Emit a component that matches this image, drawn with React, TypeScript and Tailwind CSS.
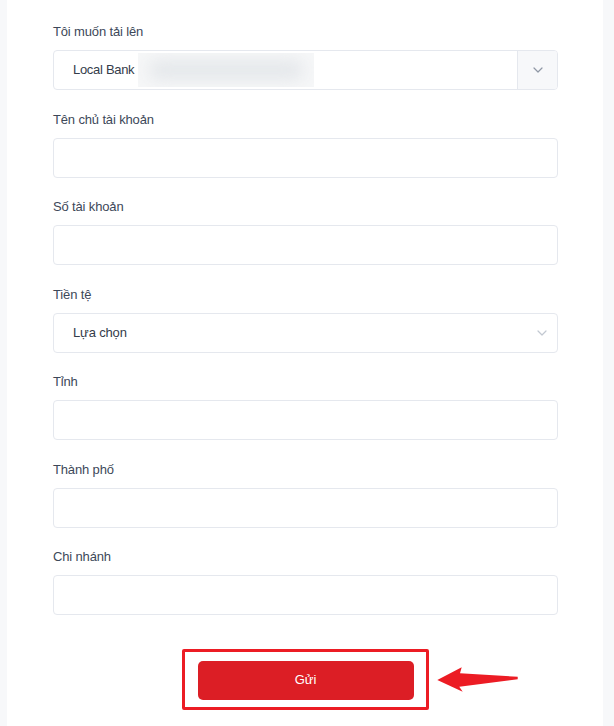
import React from "react";

const font = { fontFamily: '"Liberation Sans", Arial, sans-serif' };

function Chevron({ color }: { color: string }) {
  return (
    <svg width="10" height="6" viewBox="0 0 10 6" fill="none">
      <path d="M1 1 L5 5 L9 1" stroke={color} strokeWidth="1.2" strokeLinecap="round" strokeLinejoin="round" />
    </svg>
  );
}

function Field({ label, children }: { label: string; children?: React.ReactNode }) {
  return (
    <div className="mb-[19.5px]">
      <div className="h-5 mb-2 text-[13px] leading-5 tracking-[-0.15px] text-[#3d4859]">{label}</div>
      {children ?? <div className="h-10 rounded border border-[#e5e8ee] bg-white" />}
    </div>
  );
}

export default function App() {
  return (
    <div className="relative min-h-[726px] bg-[#f7f8fa]" style={font}>
      <div className="ml-[7px] w-[596px] min-h-[726px] bg-white pl-[46px] pr-[45px] pt-[22px]">
        <Field label="Tôi muốn tải lên">
          <div className="flex h-10 rounded border border-[#e5e8ee] bg-white overflow-hidden">
            <div className="flex flex-1 items-center pl-[19px]">
              <span className="text-[13px] tracking-[-0.3px] text-[#343c4a]">Local Bank</span>
              <div className="ml-[4px] h-[34px] w-[176px] overflow-hidden bg-[#f6f7f8]">
                <div className="mx-[10px] my-[7px] h-[20px] rounded-full bg-[#e4e7ea] blur-[8px]" />
              </div>
            </div>
            <div className="flex w-10 items-center justify-center border-l border-[#e5e8ee] bg-[#f7f8fa]">
              <Chevron color="#8f97a5" />
            </div>
          </div>
        </Field>
        <Field label="Tên chủ tài khoản" />
        <Field label="Số tài khoản" />
        <Field label="Tiền tệ">
          <div className="flex h-10 items-center justify-between rounded border border-[#e5e8ee] bg-white pl-[19px] pr-[10px]">
            <span className="text-[13px] tracking-[-0.15px] text-[#343c4a]">Lựa chọn</span>
            <Chevron color="#c2c8d1" />
          </div>
        </Field>
        <Field label="Tỉnh" />
        <Field label="Thành phố" />
        <Field label="Chi nhánh" />
        <div className="flex justify-center pt-[26px]">
          <button className="h-[39px] w-[216px] rounded-[5px] bg-[#dc1e25] text-[13px] text-white">Gửi</button>
        </div>
      </div>
      <div className="absolute left-[182px] top-[649px] h-[61px] w-[247px] rounded-[2px] border-[3px] border-[#ec1c24]" />
      <svg className="absolute left-[436px] top-[665px]" width="84" height="30" viewBox="0 0 84 30">
        <polygon
          points="1.3,15 25.7,2.3 24,8.3 81.7,11.7 81.7,14.3 23.3,21.7 26.7,26.7"
          fill="#ec1c24"
        />
      </svg>
    </div>
  );
}
